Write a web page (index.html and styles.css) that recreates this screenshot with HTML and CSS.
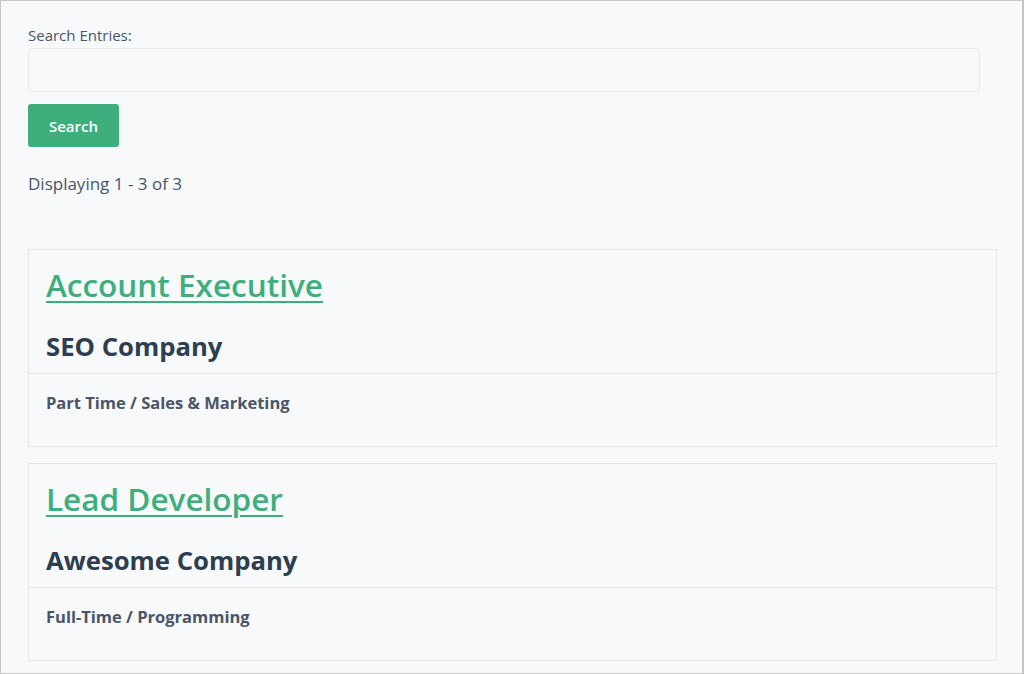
FILE: index.html
```html
<!DOCTYPE html>
<html lang="en">
<head>
<meta charset="UTF-8" />
<meta name="viewport" content="width=device-width, initial-scale=1" />
<title>Job Listings</title>
<link rel="stylesheet" href="styles.css">
</head>
<body>
<div class="frame">
  <form class="search">
    <label class="search__label" for="search_entries">Search Entries:</label>
    <input type="text" id="search_entries" class="search__input" />
    <button type="submit" class="search__button">Search</button>
  </form>
  <p class="count">Displaying 1 - 3 of 3</p>

  <div class="listings">
    <div class="card">
      <div class="card__header">
        <h2 class="card__title"><a href="#">Account Executive</a></h2>
        <h3 class="card__company">SEO Company</h3>
      </div>
      <div class="card__body">
        <p class="card__meta">Part Time / Sales &amp; Marketing</p>
      </div>
    </div>
    <div class="card">
      <div class="card__header">
        <h2 class="card__title"><a href="#">Lead Developer</a></h2>
        <h3 class="card__company">Awesome Company</h3>
      </div>
      <div class="card__body">
        <p class="card__meta">Full-Time / Programming</p>
      </div>
    </div>
  </div>
</div>
</body>
</html>
```

FILE: styles.css
```css
/* base */
html, body {
  margin: 0;
  padding: 0;
  overflow: hidden;
}
body {
  font-family: 'Open Sans', 'Noto Sans', sans-serif;
  color: #4a5568;
  background: #fff;
}
.frame {
  box-sizing: border-box;
  height: 674px;
  border: 1px solid #c6c6c6;
  border-right-width: 2px;
  background: #f8f9fb;
  padding: 24px 25px 0 27px;
  overflow: hidden;
}

/* search form */
.search {
  display: flex;
  flex-direction: column;
  align-items: flex-start;
}
.search__label {
  font-size: 15px;
  line-height: 20px;
  color: #4a5568;
  margin-bottom: 3px;
}
.search__input {
  box-sizing: border-box;
  width: 952px;
  height: 44px;
  border: 1px solid #e8eaed;
  border-radius: 4px;
  background: #f8f9fb;
  outline: none;
  font-size: 15px;
  padding: 0 12px;
}
.search__button {
  margin-top: 12px;
  width: 91px;
  height: 43px;
  border: none;
  border-radius: 3px;
  background: #3eaf7c;
  color: #fff;
  font-family: inherit;
  font-size: 15px;
  font-weight: 600;
  cursor: pointer;
}
.count {
  margin: 25px 0 0;
  font-size: 17px;
  line-height: 24px;
  color: #4a5568;
}

/* cards */
.listings {
  margin-top: 53px;
  display: flex;
  flex-direction: column;
  gap: 16px;
}
.card {
  border: 1px solid #e3e5e9;
  background: #f8f9fb;
}
.card__header {
  padding: 15px 17px 9px;
  border-bottom: 1px solid #e3e5e9;
}
.card__title {
  margin: 0;
  font-size: 31.5px;
  line-height: 40px;
  font-weight: 600;
}
.card__title a {
  color: #3eaf7c;
  text-decoration: underline;
  text-underline-offset: 4px;
  text-decoration-thickness: 2px;
}
.card__company {
  margin: 25px 0 0;
  font-size: 25.7px;
  line-height: 34px;
  font-weight: 700;
  color: #2c3e50;
}
.card__body {
  padding: 17px 17px 31px;
}
.card__meta {
  margin: 0;
  font-size: 16.5px;
  line-height: 24px;
  font-weight: 700;
  color: #4a5568;
}
```
